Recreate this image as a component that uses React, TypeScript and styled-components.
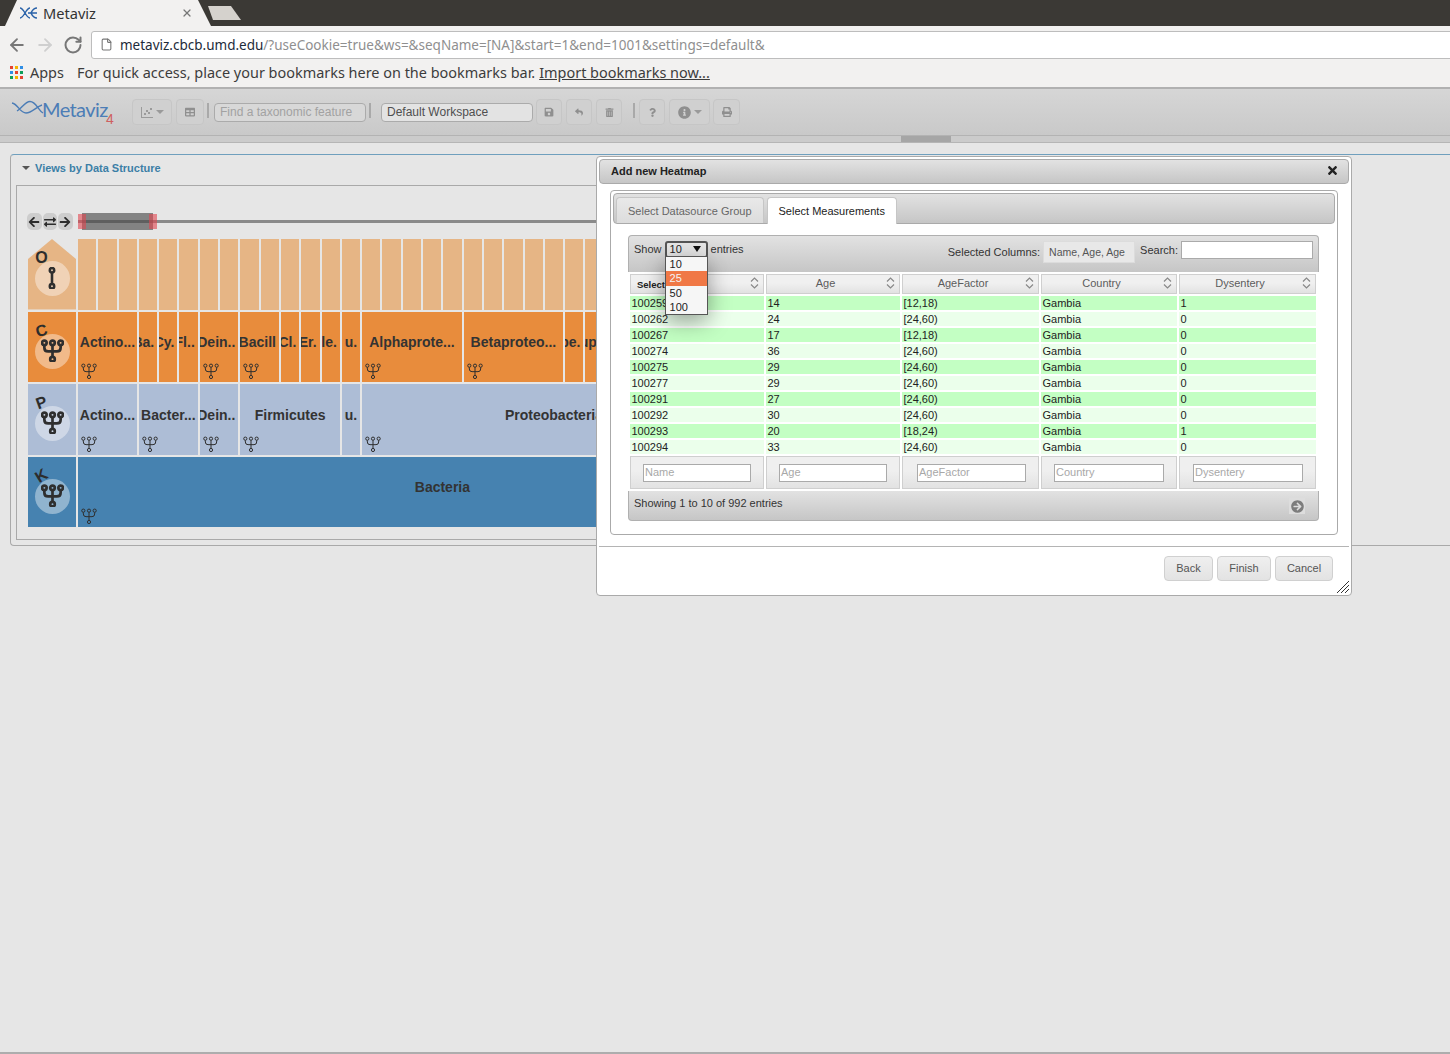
import styled, { createGlobalStyle } from 'styled-components'
import { ArrowLeft, ArrowRight, File, RotateCw, X } from 'lucide-react'
import {
  FaArrowCircleRight,
  FaArrowLeft,
  FaArrowRight,
  FaExchangeAlt,
  FaInfoCircle,
  FaPrint,
  FaQuestion,
  FaReply,
  FaSave,
  FaTable,
  FaTimes,
  FaTrashAlt,
} from 'react-icons/fa'

const GlobalStyle = createGlobalStyle`
  html, body {
    margin: 0;
    padding: 0;
    background: #e6e6e6;
  }
  * {
    box-sizing: border-box;
  }
`

const barGradient = 'linear-gradient(#e2e2e2, #c6c6c6)'
const LEAF = 18.3
const GAP = 2

const Page = styled.div`
  position: relative;
  display: flex;
  flex-direction: column;
  height: 1054px;
  overflow: hidden;
  border-bottom: 2px solid #adadad;
  background: #e6e6e6;
  font-family: 'Liberation Sans', Arial, sans-serif;
  font-size: 11px;
  color: #333;
`

const TabStrip = styled.div`
  display: flex;
  align-items: flex-end;
  height: 26px;
  padding-left: 5px;
  background: #3b3935;
`

const BrowserTab = styled.div`
  display: flex;
  align-items: center;
  width: 206px;
  height: 26px;
  padding: 0 18px 0 15px;
  gap: 5px;
  background: #f2f1f0;
  clip-path: polygon(12px 0, 193px 0, 206px 100%, 0 100%);
  font-family: 'Noto Sans', sans-serif;
  font-size: 14.6px;
  color: #333;

  span {
    flex: 1;
  }
`

const NewTab = styled.div`
  width: 33px;
  height: 14px;
  margin: 0 0 6px -3px;
  background: #d5d2cd;
  clip-path: polygon(0 0, 23px 0, 33px 100%, 5px 100%);
`

const AddressRow = styled.div`
  display: flex;
  align-items: center;
  height: 33px;
  padding: 4px 0 0 7px;
  background: #f2f1f0;
  gap: 8px;
`

const NavIcons = styled.div`
  display: flex;
  align-items: center;
  gap: 8px;
  width: 76px;
`

const Omnibox = styled.div`
  display: flex;
  align-items: center;
  flex: 1;
  height: 28px;
  margin-right: -6px;
  padding-left: 8px;
  gap: 7px;
  background: #fff;
  border: 1px solid #bdbdbd;
  border-radius: 3px;
  font-family: 'Noto Sans', sans-serif;
  font-size: 13.5px;
  color: #1d2b3a;

  em {
    font-style: normal;
    color: #8f8f8f;
  }
`

const BookmarkBar = styled.div`
  display: flex;
  align-items: center;
  height: 30px;
  padding: 0 0 2px 10px;
  background: #f2f1f0;
  border-bottom: 2px solid #b1b1b1;
  font-family: 'Noto Sans', sans-serif;
  font-size: 14.45px;
  color: #3c3c3c;

  u {
    margin-left: 4px;
  }
`

const AppsGrid = styled.div`
  display: grid;
  grid-template-columns: repeat(3, 3px);
  grid-auto-rows: 3px;
  gap: 2px;
  margin-right: 7px;
`

const AppsDot = styled.i<{ $color: string }>`
  background: ${p => p.$color};
`

const AppsLabel = styled.span`
  margin-right: 13px;
`

const Toolbar = styled.div`
  display: flex;
  align-items: center;
  height: 47px;
  padding: 0 0 0 12px;
  background: linear-gradient(#d6d6d6, #c9c9c9);
  border-bottom: 1px solid #b3b3b3;
`

const Logo = styled.div`
  position: relative;
  display: flex;
  align-items: center;
  width: 120px;
  height: 30px;
  margin-top: -7px;
  font-family: Lato, sans-serif;
  font-weight: 400;
  font-size: 20px;
  letter-spacing: -0.6px;
  color: #4c7db6;

  svg {
    margin-top: -2px;
    overflow: visible;
  }

  span {
    margin-left: -2px;
  }
`

const LogoFour = styled.b`
  position: absolute;
  left: 94px;
  top: 17px;
  font-family: 'Liberation Sans', sans-serif;
  font-weight: 400;
  font-size: 14px;
  letter-spacing: 0;
  color: #cf5f60;
`

const ToolButton = styled.button<{ $width?: number; $ml?: number }>`
  display: flex;
  align-items: center;
  justify-content: center;
  gap: 3px;
  width: ${p => p.$width ?? 26}px;
  height: 26px;
  margin-left: ${p => p.$ml ?? 4}px;
  padding: 0;
  background: #d0d0d0;
  border: 1px solid #c6c6c6;
  border-radius: 4px;
  color: #8f8f8f;
  font-size: 11px;
`

const Caret = styled.i`
  width: 0;
  height: 0;
  border: 4px solid transparent;
  border-top-color: #9a9a9a;
  border-bottom: 0;
`

const ToolSeparator = styled.i<{ $ml: number; $mr: number }>`
  width: 2px;
  height: 15px;
  margin: -3px ${p => p.$mr}px 0 ${p => p.$ml}px;
  background: #a9a9a9;
`

const ToolField = styled.div<{ $light?: boolean }>`
  display: flex;
  align-items: center;
  width: 152px;
  height: 19px;
  padding-left: 5px;
  background: ${p => (p.$light ? '#e3e3e3' : '#d8d8d8')};
  border: 1px solid #ababab;
  border-radius: 4px;
  font-size: 12px;
  color: ${p => (p.$light ? '#4f4f4f' : '#a2a2a2')};
`

const Splitter = styled.div`
  height: 7px;
  padding-left: 901px;
  background: #cbcbcb;
  border-bottom: 1px solid #b5b5b5;
`

const SplitterHandle = styled.i`
  display: block;
  width: 50px;
  height: 6px;
  background: #a6a6a6;
`

const Content = styled.div`
  padding: 11px 0 0 10px;
`

const Panel = styled.section`
  height: 392px;
  margin-right: -8px;
  padding: 0 0 0 5px;
  border: 1px solid #a9a9a9;
  border-top-color: #6f9fbd;
  border-right: 0;
  border-radius: 4px 0 0 4px;
`

const PanelTitle = styled.h3`
  display: flex;
  align-items: center;
  gap: 5px;
  height: 30px;
  margin: 0 0 0 6px;
  padding-bottom: 4px;
  font-size: 11px;
  font-weight: 700;
  color: #3c7fa6;
`

const TitleCaret = styled.i`
  width: 0;
  height: 0;
  border: 4px solid transparent;
  border-top-color: #555;
  border-bottom: 0;
`

const Stage = styled.div`
  width: 1000px;
  height: 355px;
  padding: 27px 0 0 11px;
  border: 1px solid #a9a9a9;
  border-right: 0;
`

const SliderRow = styled.div`
  display: flex;
  align-items: center;
  height: 17px;
  margin: 0 0 9px -1px;
`

const SliderButton = styled.button`
  display: flex;
  align-items: center;
  justify-content: center;
  width: 14.5px;
  height: 17px;
  margin-right: 1px;
  padding: 0;
  background: #cdcdcd;
  border: 0;
  border-radius: 5px;
  color: #2d2d2d;
  font-size: 12px;
`

const Rail = styled.div`
  position: relative;
  flex: 1;
  height: 3px;
  margin-left: 4px;
  background: #8a8a8a;
`

const Brush = styled.i`
  position: absolute;
  left: 4px;
  top: -7px;
  width: 71px;
  height: 17px;
  background: rgba(70, 70, 70, 0.62);
`

const BrushHandle = styled.i<{ $left: number }>`
  position: absolute;
  left: ${p => p.$left}px;
  top: -6px;
  width: 8px;
  height: 15px;
  background: rgba(225, 70, 80, 0.6);
`

const Icicle = styled.div`
  display: flex;
  flex-direction: column;
  gap: 2px;
`

const IcicleRow = styled.div`
  display: flex;
  gap: ${GAP}px;
  height: 70.5px;
`

const RowHead = styled.div<{ $color: string; $house?: boolean }>`
  position: relative;
  flex: none;
  width: 48px;
  background: ${p => p.$color};
  ${p => p.$house && 'clip-path: polygon(50% 0, 100% 20px, 100% 100%, 0 100%, 0 20px);'}
`

const LevelRing = styled.div`
  position: absolute;
  left: 6.5px;
  top: 22px;
  display: flex;
  align-items: center;
  justify-content: center;
  width: 35px;
  height: 35px;
  padding-bottom: 2px;
  border-radius: 50%;
  background: rgba(255, 255, 255, 0.4);
`

const LevelLetter = styled.span<{ $rotate: number }>`
  position: absolute;
  left: 7px;
  top: 10px;
  width: 13px;
  text-align: center;
  font-size: 16px;
  line-height: 18px;
  font-weight: 700;
  color: #2d2d2d;
  transform: rotate(${p => p.$rotate}deg);
`

const Cell = styled.div<{ $span: number; $color: string }>`
  position: relative;
  flex: none;
  display: flex;
  align-items: center;
  justify-content: ${p => (p.$span <= 2 ? 'flex-end' : 'center')};
  width: ${p => p.$span * LEAF + (p.$span - 1) * GAP}px;
  padding: 0 ${p => (p.$span <= 2 ? 3 : 0)}px 9px 0;
  overflow: hidden;
  background: ${p => p.$color};
  font-size: 14px;
  font-weight: 700;
  white-space: nowrap;
  color: #333;
`

const CellLabel = styled.span`
  flex: none;
`

const CellIcon = styled.div`
  position: absolute;
  left: 3px;
  bottom: 3px;
  display: flex;
`

const Dialog = styled.div`
  position: absolute;
  left: 596px;
  top: 156px;
  display: flex;
  flex-direction: column;
  width: 756px;
  height: 440px;
  padding: 2px;
  background: #fff;
  border: 1px solid #aaa;
  border-radius: 4px;
`

const DialogHeader = styled.header`
  display: flex;
  align-items: center;
  justify-content: space-between;
  flex: none;
  height: 25px;
  padding: 0 9px 2px 11px;
  background: ${barGradient};
  border: 1px solid #aaa;
  border-radius: 4px;
  font-weight: 700;
  color: #222;
`

const Widget = styled.div`
  flex: none;
  height: 345px;
  margin: 6px 11px 0 11px;
  padding: 2px;
  border: 1px solid #aaa;
  border-radius: 4px;
`

const TabNav = styled.nav`
  display: flex;
  align-items: flex-end;
  gap: 3px;
  height: 31px;
  padding-left: 2px;
  background: ${barGradient};
  border: 1px solid #aaa;
  border-radius: 4px;
`

const TabButton = styled.div<{ $active?: boolean }>`
  display: flex;
  align-items: center;
  height: ${p => (p.$active ? 27 : 26)}px;
  margin-bottom: ${p => (p.$active ? -1 : 0)}px;
  padding: 0 11px ${p => (p.$active ? 1 : 0)}px;
  background: ${p => (p.$active ? '#fff' : 'linear-gradient(#e9e9e9, #dcdcdc)')};
  border: 1px solid #c6c6c6;
  border-bottom: 0;
  border-radius: 4px 4px 0 0;
  color: ${p => (p.$active ? '#222' : '#666')};
`

const TableWrap = styled.div`
  width: 691px;
  margin: 11px 0 0 15px;
`

const TableBar = styled.div`
  display: flex;
  align-items: flex-start;
  height: 37px;
  padding: 5px 5px 0 5px;
  background: ${barGradient};
  border: 1px solid #b0b0b0;
  border-bottom: 0;
  border-radius: 4px 4px 0 0;
  color: #333;
`

const BarText = styled.span<{ $top: number }>`
  margin-top: ${p => p.$top}px;
`

const PageSize = styled.div`
  position: relative;
  z-index: 3;
  display: flex;
  align-items: center;
  justify-content: space-between;
  width: 43px;
  height: 17px;
  margin: 0 3px;
  padding: 0 5px 1px 3px;
  background: #e6e6e6;
  border: 2px solid #555;
  border-radius: 3px;
  color: #222;
`

const PageSizeArrow = styled.i`
  width: 0;
  height: 0;
  border: 4px solid transparent;
  border-top: 6px solid #111;
  border-bottom: 0;
`

const PageSizeMenu = styled.ul`
  position: absolute;
  left: -2px;
  top: 13px;
  width: 43px;
  height: 59px;
  margin: 0;
  padding: 0;
  list-style: none;
  background: #f6f6f6;
  border: 1px solid #555;
  box-shadow: 0 6px 22px rgba(0, 0, 0, 0.38);
`

const PageSizeItem = styled.li<{ $active?: boolean }>`
  height: 14.3px;
  padding-left: 4px;
  line-height: 14px;
  background: ${p => (p.$active ? '#f07846' : 'transparent')};
  color: ${p => (p.$active ? '#f4f4f4' : '#222')};
`

const BarSpacer = styled.div`
  flex: 1;
`

const SelectedBox = styled.div`
  width: 92px;
  height: 22px;
  margin: 0 5px 0 3px;
  padding: 0 9px 0 5px;
  background: #e8e8e8;
  border: 1px solid #dcdcdc;
  font-size: 10.5px;
  line-height: 20px;
  color: #555;
`

const SelectedText = styled.div`
  overflow: hidden;
  white-space: nowrap;
`

const SearchBox = styled.div`
  width: 132px;
  height: 18px;
  margin-left: 3px;
  background: #fff;
  border: 1px solid #aaa;
`

const DataGrid = styled.div`
  display: grid;
  grid-template-columns: 134px 134px 137px 136px 137px;
  column-gap: 2px;
  margin: 2px 0 0 2px;
`

const HeadCell = styled.div`
  display: flex;
  align-items: center;
  height: 20px;
  margin-bottom: 2px;
  padding: 0 4px 3px 0;
  background: linear-gradient(#f0f0f0 45%, #e2e2e2);
  border: 1px solid #cfcfcf;
  color: #5c5c5c;
  text-align: center;
`

const HeadLabel = styled.span<{ $select?: boolean }>`
  flex: 1;
  padding-right: 2px;
  ${p =>
    p.$select ? 'text-align: left; padding: 3px 0 0 6px; font-size: 9.5px; font-weight: 700; color: #222;' : ''}
`

const DataCell = styled.div<{ $odd: boolean }>`
  height: 14px;
  margin-bottom: 2px;
  padding-left: 1.5px;
  line-height: 14px;
  background: ${p => (p.$odd ? '#c3ffc3' : '#ebffeb')};
  color: #222;
`

const FilterCell = styled.div<{ $inset: number }>`
  display: flex;
  align-items: center;
  height: 33px;
  padding-left: ${p => p.$inset}px;
  background: linear-gradient(#efefef 45%, #e2e2e2);
  border: 1px solid #cfcfcf;
`

const FilterInput = styled.div<{ $width: number }>`
  width: ${p => p.$width}px;
  height: 18px;
  padding-left: 1px;
  line-height: 14px;
  background: #fff;
  border: 1px solid #aaa;
  color: #a8a8a8;
`

const TableFooter = styled.div`
  display: flex;
  align-items: flex-start;
  justify-content: space-between;
  height: 30px;
  margin-top: 2px;
  padding: 6px 12px 0 5px;
  background: ${barGradient};
  border: 1px solid #b0b0b0;
  border-top: 0;
  border-radius: 0 0 4px 4px;
  color: #333;
`

const PageArrow = styled.div`
  display: flex;
  align-items: center;
  justify-content: center;
  width: 16px;
  height: 16px;
  margin: 1px 1px 0 0;
  background: #dddddd;
  color: #7d7d7d;
  font-size: 13px;
`

const DialogFooter = styled.footer`
  flex: 1;
  display: flex;
  justify-content: flex-end;
  gap: 4px;
  margin: 11px 0 0 0;
  padding: 9px 16px 0 0;
  border-top: 1px solid #b4b4b4;
`

const FooterButton = styled.button<{ $width: number }>`
  width: ${p => p.$width}px;
  height: 25px;
  padding: 0 0 2px;
  background: linear-gradient(#efefef, #e3e3e3);
  border: 1px solid #d0d0d0;
  border-radius: 4px;
  font: 11px 'Liberation Sans', Arial, sans-serif;
  color: #555;
`

const ResizeGrip = styled.svg`
  position: absolute;
  right: 2px;
  bottom: 2px;
`

const TreeIcon = ({ size, weight }: { size: number; weight: number }) => (
  <svg width={size} height={size} viewBox="0 0 24 24" fill="none" stroke="#2f2f2f" strokeWidth={weight}>
    <circle cx="3.5" cy="4" r="2.4" />
    <circle cx="12" cy="4" r="2.4" />
    <circle cx="20.5" cy="4" r="2.4" />
    <circle cx="12" cy="21" r="2.4" />
    <path d="M12 6.5V18.5M3.5 6.5V9Q3.5 13 7.5 13H16.5Q20.5 13 20.5 9V6.5" />
  </svg>
)

const LineIcon = () => (
  <svg width="22" height="22" viewBox="0 0 24 24" fill="none" stroke="#2f2f2f" strokeWidth="2.8">
    <circle cx="12" cy="3.5" r="2.4" />
    <circle cx="12" cy="21" r="2.4" />
    <path d="M12 6V18.5" />
  </svg>
)

const SortIcon = () => (
  <svg width="9" height="12" viewBox="0 0 9 12" fill="none" stroke="#888" strokeWidth="1.2">
    <path d="M1 4.5L4.5 1L8 4.5M1 7.5L4.5 11L8 7.5" />
  </svg>
)

const ScatterIcon = () => (
  <svg width="12" height="11" viewBox="0 0 12 11" fill="#9a9a9a">
    <path d="M0 0H1V10H12V11H0Z" />
    <rect x="3" y="6" width="2" height="2" />
    <rect x="5" y="3" width="2" height="2" />
    <rect x="7" y="5" width="2" height="2" />
    <rect x="9" y="1" width="2" height="2" />
  </svg>
)

const appsColors = ['#e5412f', '#f4b400', '#2f8ee5', '#2f8ee5', '#e5412f', '#0f9d58', '#0f9d58', '#f4b400', '#e5412f']

type IcicleCell = { span: number; label?: string; icon?: boolean }

const classCells: IcicleCell[] = [
  { span: 3, label: 'Actino...', icon: true },
  { span: 1, label: 'Ba.' },
  { span: 1, label: 'Cy.' },
  { span: 1, label: 'Fl..' },
  { span: 2, label: 'Dein..', icon: true },
  { span: 2, label: 'Bacill', icon: true },
  { span: 1, label: 'Cl.' },
  { span: 1, label: 'Er.' },
  { span: 1, label: 'le.' },
  { span: 1, label: 'u.' },
  { span: 5, label: 'Alphaprote...', icon: true },
  { span: 5, label: 'Betaproteo...', icon: true },
  { span: 1, label: 'pe.' },
  { span: 1, label: 'up.' },
  { span: 10 },
]

const phylumCells: IcicleCell[] = [
  { span: 3, label: 'Actino...', icon: true },
  { span: 3, label: 'Bacter...', icon: true },
  { span: 2, label: 'Dein..', icon: true },
  { span: 5, label: 'Firmicutes', icon: true },
  { span: 1, label: 'u.' },
  { span: 19, label: 'Proteobacteria', icon: true },
  { span: 3 },
]

const columns = [
  { name: 'Name', inset: 12, width: 108 },
  { name: 'Age', inset: 12, width: 108 },
  { name: 'AgeFactor', inset: 14, width: 109 },
  { name: 'Country', inset: 12, width: 110 },
  { name: 'Dysentery', inset: 13, width: 110 },
]

const rows = [
  ['100259', '14', '[12,18)', 'Gambia', '1'],
  ['100262', '24', '[24,60)', 'Gambia', '0'],
  ['100267', '17', '[12,18)', 'Gambia', '0'],
  ['100274', '36', '[24,60)', 'Gambia', '0'],
  ['100275', '29', '[24,60)', 'Gambia', '0'],
  ['100277', '29', '[24,60)', 'Gambia', '0'],
  ['100291', '27', '[24,60)', 'Gambia', '0'],
  ['100292', '30', '[24,60)', 'Gambia', '0'],
  ['100293', '20', '[18,24)', 'Gambia', '1'],
  ['100294', '33', '[24,60)', 'Gambia', '0'],
]

function renderCells(cells: IcicleCell[], color: string) {
  return cells.map((cell, i) => (
    <Cell key={i} $span={cell.span} $color={color}>
      {cell.label && <CellLabel>{cell.label}</CellLabel>}
      {cell.icon && (
        <CellIcon>
          <TreeIcon size={16} weight={1.5} />
        </CellIcon>
      )}
    </Cell>
  ))
}

export default function App() {
  return (
    <Page>
      <GlobalStyle />

      <TabStrip>
        <BrowserTab>
          <svg width="18" height="12" viewBox="0 0 18 12" fill="none" stroke="#2a62a8" strokeWidth="1.4">
            <path d="M0 1C4 1 6 11 10 11M0 11C4 11 6 1 10 1M8 6H17M17 1C13 1 12 4 11 6C12 8 13 11 17 11" />
          </svg>
          <span>Metaviz</span>
          <X size={12} color="#777" strokeWidth={2.5} />
        </BrowserTab>
        <NewTab />
      </TabStrip>

      <AddressRow>
        <NavIcons>
          <ArrowLeft size={20} color="#777" strokeWidth={2.2} />
          <ArrowRight size={20} color="#cfcfcf" strokeWidth={2.2} />
          <RotateCw size={20} color="#777" strokeWidth={2.4} />
        </NavIcons>
        <Omnibox>
          <File size={13} color="#777" />
          <div>
            metaviz.cbcb.umd.edu<em>/?useCookie=true&amp;ws=&amp;seqName=[NA]&amp;start=1&amp;end=1001&amp;settings=default&amp;</em>
          </div>
        </Omnibox>
      </AddressRow>

      <BookmarkBar>
        <AppsGrid>
          {appsColors.map((color, i) => (
            <AppsDot key={i} $color={color} />
          ))}
        </AppsGrid>
        <AppsLabel>Apps</AppsLabel>
        For quick access, place your bookmarks here on the bookmarks bar.
        <u>Import bookmarks now...</u>
      </BookmarkBar>

      <Toolbar>
        <Logo>
          <svg width="32" height="13" viewBox="0 0 32 13" fill="none" stroke="#4c7db6" strokeWidth="1.4">
            <path d="M0 2C6 3 8 12 14 12C20 12 24 6 30 4M5 10C10 7 13 0.5 18 0.5C24 0.5 26 9 31 12" />
          </svg>
          <span>Metaviz</span>
          <LogoFour>4</LogoFour>
        </Logo>
        <ToolButton $width={40} $ml={0}>
          <ScatterIcon />
          <Caret />
        </ToolButton>
        <ToolButton $width={28}>
          <FaTable size={10} />
        </ToolButton>
        <ToolSeparator $ml={3} $mr={5} />
        <ToolField>Find a taxonomic feature</ToolField>
        <ToolSeparator $ml={3} $mr={10} />
        <ToolField $light>Default Workspace</ToolField>
        <ToolButton $ml={3}>
          <FaSave size={10} />
        </ToolButton>
        <ToolButton>
          <FaReply size={8} />
        </ToolButton>
        <ToolButton>
          <FaTrashAlt size={9} />
        </ToolButton>
        <ToolSeparator $ml={11} $mr={4} />
        <ToolButton $ml={0}>
          <FaQuestion size={9} />
        </ToolButton>
        <ToolButton $width={41}>
          <FaInfoCircle size={13} />
          <Caret />
        </ToolButton>
        <ToolButton $width={27} $ml={3}>
          <FaPrint size={10} />
        </ToolButton>
      </Toolbar>

      <Splitter>
        <SplitterHandle />
      </Splitter>

      <Content>
        <Panel>
          <PanelTitle>
            <TitleCaret />
            Views by Data Structure
          </PanelTitle>
          <Stage>
            <SliderRow>
              <SliderButton>
                <FaArrowLeft />
              </SliderButton>
              <SliderButton>
                <FaExchangeAlt />
              </SliderButton>
              <SliderButton>
                <FaArrowRight />
              </SliderButton>
              <Rail>
                <Brush />
                <BrushHandle $left={0} />
                <BrushHandle $left={71} />
              </Rail>
            </SliderRow>
            <Icicle>
              <IcicleRow>
                <RowHead $color="#e6b585" $house>
                  <LevelRing>
                    <LineIcon />
                  </LevelRing>
                  <LevelLetter $rotate={0}>O</LevelLetter>
                </RowHead>
                {Array.from({ length: 36 }, (_, i) => (
                  <Cell key={i} $span={1} $color="#e6b585" />
                ))}
              </IcicleRow>
              <IcicleRow>
                <RowHead $color="#e88c3c">
                  <LevelRing>
                    <TreeIcon size={23} weight={2.8} />
                  </LevelRing>
                  <LevelLetter $rotate={-15}>C</LevelLetter>
                </RowHead>
                {renderCells(classCells, '#e88c3c')}
              </IcicleRow>
              <IcicleRow>
                <RowHead $color="#adbdd6">
                  <LevelRing>
                    <TreeIcon size={23} weight={2.8} />
                  </LevelRing>
                  <LevelLetter $rotate={-20}>P</LevelLetter>
                </RowHead>
                {renderCells(phylumCells, '#adbdd6')}
              </IcicleRow>
              <IcicleRow>
                <RowHead $color="#4682b0">
                  <LevelRing>
                    <TreeIcon size={23} weight={2.8} />
                  </LevelRing>
                  <LevelLetter $rotate={-32}>K</LevelLetter>
                </RowHead>
                {renderCells([{ span: 36, label: 'Bacteria', icon: true }], '#4682b0')}
              </IcicleRow>
            </Icicle>
          </Stage>
        </Panel>
      </Content>

      <Dialog>
        <DialogHeader>
          Add new Heatmap
          <FaTimes size={13} color="#222" />
        </DialogHeader>
        <Widget>
          <TabNav>
            <TabButton>Select Datasource Group</TabButton>
            <TabButton $active>Select Measurements</TabButton>
          </TabNav>
          <TableWrap>
            <TableBar>
              <BarText $top={2}>Show</BarText>
              <PageSize>
                10
                <PageSizeArrow />
                <PageSizeMenu>
                  <PageSizeItem>10</PageSizeItem>
                  <PageSizeItem $active>25</PageSizeItem>
                  <PageSizeItem>50</PageSizeItem>
                  <PageSizeItem>100</PageSizeItem>
                </PageSizeMenu>
              </PageSize>
              <BarText $top={2}>entries</BarText>
              <BarSpacer />
              <BarText $top={5}>Selected Columns:</BarText>
              <SelectedBox>
                <SelectedText>Name, Age, AgeFactor</SelectedText>
              </SelectedBox>
              <BarText $top={3}>Search:</BarText>
              <SearchBox />
            </TableBar>
            <DataGrid>
              {columns.map((col, i) => (
                <HeadCell key={col.name}>
                  <HeadLabel $select={i === 0}>{i === 0 ? 'Select' : col.name}</HeadLabel>
                  <SortIcon />
                </HeadCell>
              ))}
              {rows.map((row, r) =>
                row.map((value, c) => (
                  <DataCell key={`${r}-${c}`} $odd={r % 2 === 0}>
                    {value}
                  </DataCell>
                )),
              )}
              {columns.map(col => (
                <FilterCell key={col.name} $inset={col.inset}>
                  <FilterInput $width={col.width}>{col.name}</FilterInput>
                </FilterCell>
              ))}
            </DataGrid>
            <TableFooter>
              Showing 1 to 10 of 992 entries
              <PageArrow>
                <FaArrowCircleRight />
              </PageArrow>
            </TableFooter>
          </TableWrap>
        </Widget>
        <DialogFooter>
          <FooterButton $width={49}>Back</FooterButton>
          <FooterButton $width={54}>Finish</FooterButton>
          <FooterButton $width={58}>Cancel</FooterButton>
        </DialogFooter>
        <ResizeGrip width="12" height="12" viewBox="0 0 12 12" stroke="#333" strokeWidth="1">
          <path d="M0 12L12 0M4 12L12 4M8 12L12 8" />
        </ResizeGrip>
      </Dialog>
    </Page>
  )
}
